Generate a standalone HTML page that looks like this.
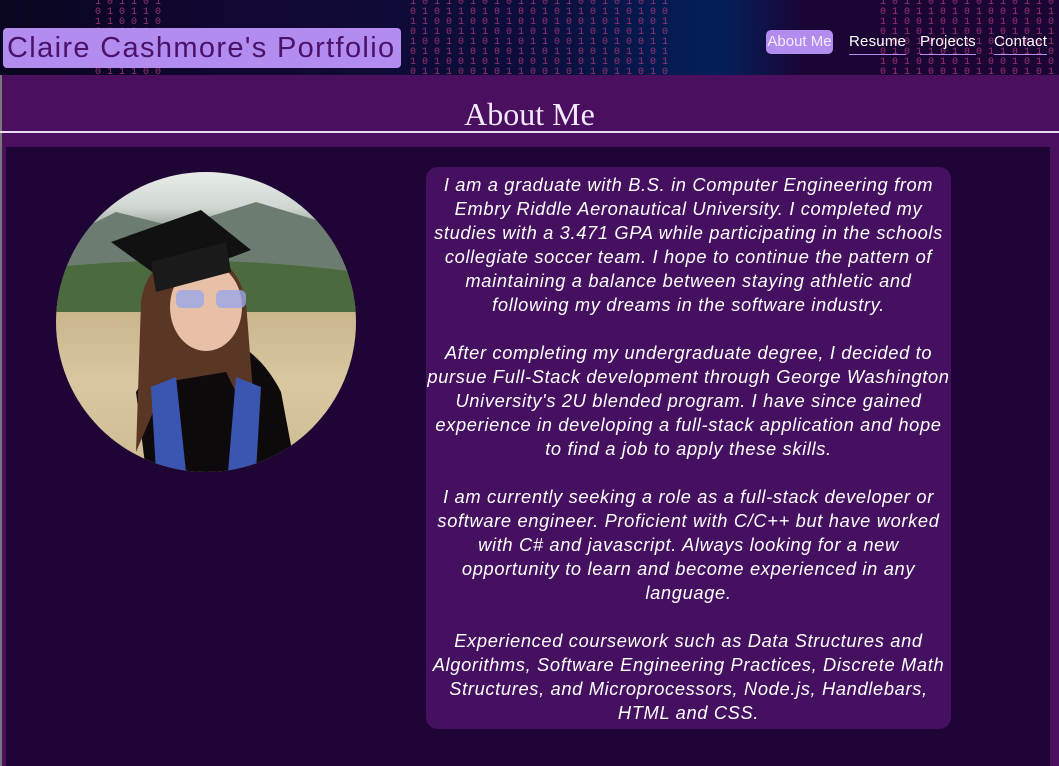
<!DOCTYPE html>
<html><head><meta charset="utf-8"><style>
*{margin:0;padding:0;box-sizing:border-box}
body{width:1059px;height:766px;overflow:hidden;background:#4a0f5e;font-family:"Liberation Sans",sans-serif;position:relative}
.edge{position:absolute;left:0;top:75px;width:2px;height:691px;background:#777}
.hdr{position:absolute;left:0;top:0;width:1059px;height:75px;background:linear-gradient(90deg,#0a0520 0%,#120835 25%,#0c0d3a 50%,#03205a 68%,#1a0535 76%,#1a0535 100%);overflow:hidden}
.rain{position:absolute;top:-2px;font:10px/10px "Liberation Mono",monospace;color:#b03a7a;white-space:pre;opacity:.85}
.title{position:absolute;left:3px;top:28px;height:40px;padding:0 4px;width:398px;background:#b38cf0;border-radius:4px;color:#4a1268;font-size:29px;line-height:40px;letter-spacing:1.35px;white-space:nowrap}
.nav{position:absolute;top:30px;font-size:15px;color:#fff;line-height:24px}
.nav a{position:absolute;color:#fff;white-space:nowrap;letter-spacing:.2px}
.ul{border-bottom:1px solid #b38cf0}
h1{position:absolute;left:0;width:1059px;top:96px;text-align:center;font:32px "Liberation Serif",serif;color:#f3e8ff}
.line{position:absolute;left:0;top:131px;width:1059px;height:2px;background:#e8e0f0}
.main{position:absolute;left:6px;top:147px;width:1044px;height:619px;background:#1f0535}
.box{position:absolute;left:426px;top:167px;width:525px;height:562px;background:#461060;border-radius:12px;color:#fff;font-style:italic;font-size:18.3px;line-height:24px;text-align:center;padding-top:6px;white-space:nowrap;letter-spacing:.65px}
.photo{position:absolute;left:56px;top:172px;width:300px;height:300px;border-radius:50%;overflow:hidden;background:linear-gradient(180deg,#e8ece8 0%,#cfd6d0 12%,#7d8a80 22%,#4f6a45 35%,#c9b48a 45%,#d8c7a0 70%,#cdbb92 100%)}
</style></head><body>
<div class="hdr">
<div class="rain" style="left:95px">1 0 1 1 0 1
0 1 0 1 1 0
1 1 0 0 1 0
0 1 1 0 1 1
1 0 0 1 0 1
0 1 0 1 1 0
1 0 1 0 0 1
0 1 1 1 0 0</div>
<div class="rain" style="left:410px">1 0 1 1 0 1 0 1 0 1 1 0 1 1 0 0 1 0 1 0 1 1
0 1 0 1 1 0 1 0 1 0 0 1 0 1 1 0 1 1 0 1 0 0
1 1 0 0 1 0 0 1 1 0 1 0 1 0 0 1 0 1 1 0 0 1
0 1 1 0 1 1 1 0 0 1 0 1 0 1 1 0 1 0 0 1 1 0
1 0 0 1 0 1 0 1 1 0 1 1 0 0 1 1 0 1 0 0 1 1
0 1 0 1 1 0 1 0 0 1 1 0 1 1 0 0 1 0 1 1 0 1
1 0 1 0 0 1 0 1 1 0 0 1 0 1 0 1 1 0 0 1 0 1
0 1 1 1 0 0 1 0 1 1 0 0 1 0 1 1 0 1 1 0 1 0</div>
<div class="rain" style="left:880px">1 0 1 1 0 1 0 1 0 1 1 0 1 1 0
0 1 0 1 1 0 1 0 1 0 0 1 0 1 1
1 1 0 0 1 0 0 1 1 0 1 0 1 0 0
0 1 1 0 1 1 1 0 0 1 0 1 0 1 1
1 0 0 1 0 1 0 1 1 0 1 1 0 0 1
0 1 0 1 1 0 1 0 0 1 1 0 1 1 0
1 0 1 0 0 1 0 1 1 0 0 1 0 1 0
0 1 1 1 0 0 1 0 1 1 0 0 1 0 1</div>
<div class="title">Claire Cashmore's Portfolio</div>
<div class="nav">
<a style="left:766px;top:0;width:67px;height:24px;background:#b38cf0;border-radius:5px;text-align:center;color:#f3ecff;letter-spacing:0">About Me</a>
<a class="ul" style="left:849px">Resume</a>
<a class="ul" style="left:920px">Projects</a>
<a class="ul" style="left:994px">Contact</a>
</div>
</div>
<div class="edge"></div>
<h1>About Me</h1>
<div class="line"></div>
<div class="main"></div>
<div class="photo">
<svg width="300" height="300" viewBox="0 0 300 300">
<path d="M0 70 L60 40 L120 55 L200 30 L300 60 L300 100 L0 100Z" fill="#6d7c70"/>
<path d="M0 95 Q150 80 300 100 L300 140 L0 140Z" fill="#4b6b3e"/>
<path d="M90 300 L80 220 Q110 170 150 160 Q200 170 225 220 L240 300Z" fill="#0e0a0c"/>
<path d="M85 130 Q90 90 130 80 Q180 80 190 130 L200 260 L170 200 L110 210 L80 280Z" fill="#5a3624"/>
<ellipse cx="150" cy="135" rx="36" ry="44" fill="#e8c0a8"/>
<path d="M55 70 L145 38 L195 78 L110 110Z" fill="#111"/>
<path d="M95 90 L170 70 L175 100 L100 120Z" fill="#1a1a1a"/>
<path d="M100 300 L95 215 L120 205 L130 300Z" fill="#3b56b0"/>
<path d="M200 300 L205 215 L180 205 L172 300Z" fill="#3b56b0"/>
<rect x="120" y="118" width="28" height="18" rx="6" fill="#9aa8e8" opacity=".8"/>
<rect x="160" y="118" width="30" height="18" rx="6" fill="#9aa8e8" opacity=".8"/>
</svg>
</div>
<div class="box">I am a graduate with B.S. in Computer Engineering from<br>Embry Riddle Aeronautical University. I completed my<br>studies with a 3.471 GPA while participating in the schools<br>collegiate soccer team. I hope to continue the pattern of<br>maintaining a balance between staying athletic and<br>following my dreams in the software industry.<br><br>After completing my undergraduate degree, I decided to<br>pursue Full-Stack development through George Washington<br>University's 2U blended program. I have since gained<br>experience in developing a full-stack application and hope<br>to find a job to apply these skills.<br><br>I am currently seeking a role as a full-stack developer or<br>software engineer. Proficient with C/C++ but have worked<br>with C# and javascript. Always looking for a new<br>opportunity to learn and become experienced in any<br>language.<br><br>Experienced coursework such as Data Structures and<br>Algorithms, Software Engineering Practices, Discrete Math<br>Structures, and Microprocessors, Node.js, Handlebars,<br>HTML and CSS.</div>
</body></html>
